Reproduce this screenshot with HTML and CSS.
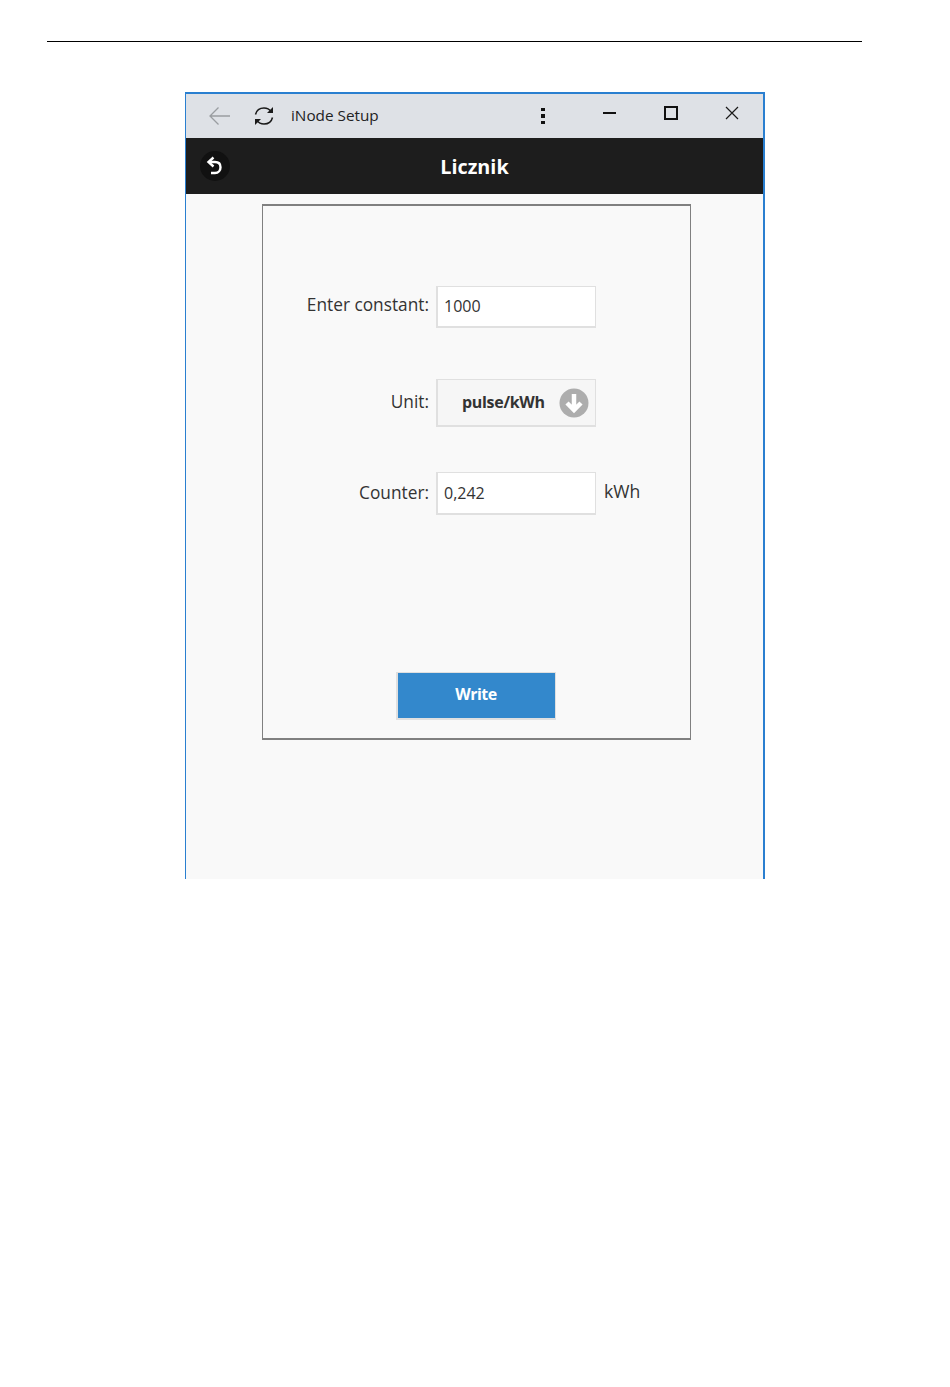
FILE: index.html
```html
<!DOCTYPE html>
<html lang="en">
<head>
    <meta charset="UTF-8">
    <title>iNode Setup</title>
    <link rel="stylesheet" href="styles.css">
</head>
<body>
    <div class="page-rule"></div>

    <div class="window">
        <div class="titlebar">
            <div class="titlebar-left">
                <svg class="icon-back" width="24" height="20" viewBox="0 0 24 20">
                    <path d="M22 10H2M10.500 1.500L2 10l8.500 8.500" fill="none" stroke="#9a9da1" stroke-width="1.300"/>
                </svg>
                <svg class="icon-sync" width="22" height="22" viewBox="0 0 22 22">
                    <path d="M2.500 9.500C3.500 5.500 7 3 11 3c3 0 5.500 1.300 7 3.600" fill="none" stroke="#1a1a1a" stroke-width="1.500"/>
                    <path d="M20 2v6h-6" fill="#1a1a1a"/>
                    <path d="M19.500 12.500C18.500 16.500 15 19 11 19c-3 0-5.500-1.300-7-3.600" fill="none" stroke="#1a1a1a" stroke-width="1.500"/>
                    <path d="M2 20v-6h6" fill="#1a1a1a"/>
                </svg>
                <span class="app-name">iNode Setup</span>
            </div>
            <div class="titlebar-right">
                <div class="dots"><i></i><i></i><i></i></div>
                <div class="win-min"></div>
                <div class="win-max"></div>
                <svg class="win-close" width="14" height="14" viewBox="0 0 14 14">
                    <path d="M1 1l12 12M13 1L1 13" stroke="#1a1a1a" stroke-width="1.200" fill="none"/>
                </svg>
            </div>
        </div>

        <div class="app-header">
            <div class="back-btn">
                <svg width="20" height="22" viewBox="0 0 20 22">
                    <path d="M8.500 2.500L3.500 7l5 4.500" fill="none" stroke="#fff" stroke-width="2.400"/>
                    <path d="M4 7h6c3.500 0 5.500 2.200 5.500 5.200S13.500 18 10 18H6" fill="none" stroke="#fff" stroke-width="2.400"/>
                </svg>
            </div>
            <h1>Licznik</h1>
        </div>

        <div class="content">
            <div class="panel">
                <div class="row row-constant">
                    <label>Enter constant:</label>
                    <input class="field" type="text" value="1000">
                </div>
                <div class="row row-unit">
                    <label>Unit:</label>
                    <div class="select">
                        <span>pulse/kWh</span>
                        <svg width="30" height="30" viewBox="0 0 30 30">
                            <circle cx="15" cy="15" r="14.500" fill="#adadad"/>
                            <path d="M15 6v16M8 15l7 7 7-7" fill="none" stroke="#fff" stroke-width="4.500"/>
                        </svg>
                    </div>
                </div>
                <div class="row row-counter">
                    <label>Counter:</label>
                    <input class="field field-tall" type="text" value="0,242">
                    <span class="unit-text">kWh</span>
                </div>
                <button class="write-btn">Write</button>
            </div>
        </div>
    </div>
</body>
</html>
```

FILE: styles.css
```css
body {
    margin: 0;
    background-color: #fff;
    font-family: "Open Sans", sans-serif;
}

.page-rule {
    height: 1px;
    width: 815px;
    margin: 41px 0 0 47px;
    background-color: #000;
}

.window {
    box-sizing: border-box;
    width: 580px;
    height: 787px;
    margin: 50px 0 0 185px;
    border: 2px solid #2a7fd0;
    border-width: 2px 2px 0 1px;
    background-color: #f9f9f9;
}

.titlebar {
    height: 44px;
    display: flex;
    justify-content: space-between;
    background-color: #dee1e6;
}

.titlebar-left {
    display: flex;
    align-items: center;
    padding-left: 22px;
}

.icon-sync {
    margin-left: 21px;
}

.app-name {
    margin-left: 16px;
    margin-bottom: 2px;
    font-size: 15.300px;
    color: #222;
}

.titlebar-right {
    display: flex;
    align-items: center;
    padding-right: 24px;
}

.dots {
    display: flex;
    flex-direction: column;
    gap: 3px;
    margin-right: 1px;
}

.dots i {
    width: 4px;
    height: 3.500px;
    background-color: #111;
}

.win-min {
    width: 13px;
    height: 2px;
    margin-left: 57px;
    margin-bottom: 6px;
    background-color: #111;
}

.win-max {
    box-sizing: border-box;
    width: 14px;
    height: 14px;
    margin-left: 48px;
    margin-bottom: 6px;
    border: 2px solid #111;
}

.win-close {
    margin-left: 47px;
    margin-bottom: 6px;
}

.app-header {
    position: relative;
    height: 56px;
    background-color: #1d1d1d;
    text-align: center;
}

.app-header h1 {
    margin: 0;
    font-size: 19.800px;
    line-height: 58px;
    font-weight: 700;
    color: #fff;
}

.back-btn {
    position: absolute;
    left: 14px;
    top: 13px;
    width: 30px;
    height: 30px;
    border-radius: 50%;
    background-color: #111;
    display: flex;
    align-items: center;
    justify-content: center;
}

.content {
    padding: 10px 0 0 76px;
}

.panel {
    box-sizing: border-box;
    width: 429px;
    height: 536px;
    padding-top: 80px;
    border: 1px solid #808080;
    border-bottom-width: 2px;
    border-top-width: 2px;
}

.row {
    display: flex;
    align-items: center;
    color: #333;
    font-size: 17.300px;
}

.row label {
    width: 166px;
    text-align: right;
    margin-right: 7px;
}

.row-constant label {
    padding-bottom: 6px;
}

.row-unit label {
    padding-bottom: 4px;
}

.row-counter label {
    padding-bottom: 2px;
}

.field {
    box-sizing: border-box;
    width: 160px;
    height: 42px;
    padding: 0 6px 2px;
    border: 2px solid #e0e0e0;
    border-width: 1px 1px 2px 2px;
    background-color: #fff;
    font-family: "Open Sans", sans-serif;
    font-size: 16px;
    color: #333;
    outline: none;
}

.field-tall {
    height: 43px;
    padding-bottom: 1px;
}

.row-unit {
    margin-top: 51px;
}

.select {
    box-sizing: border-box;
    width: 160px;
    height: 48px;
    display: flex;
    align-items: center;
    justify-content: space-between;
    padding: 0 6px 0 24px;
    border: 2px solid #e0e0e0;
    border-width: 1px 1px 2px 2px;
    background-color: #f6f6f6;
    font-size: 16px;
    font-weight: 700;
}

.select span {
    padding-bottom: 2px;
    letter-spacing: -0.3px;
}

.row-counter {
    margin-top: 45px;
}

.unit-text {
    margin-left: 8px;
    margin-bottom: 6px;
    font-size: 17.600px;
}

.write-btn {
    display: block;
    box-sizing: border-box;
    width: 160px;
    height: 48px;
    margin: 157px 0 0 133px;
    padding: 0 1px 3px 0;
    border: 2px solid #e0e0e0;
    border-width: 1px 1px 2px 2px;
    background-color: #3388cc;
    color: #fff;
    font-family: "Open Sans", sans-serif;
    font-size: 16px;
    font-weight: 700;
    letter-spacing: -0.5px;
}
```
